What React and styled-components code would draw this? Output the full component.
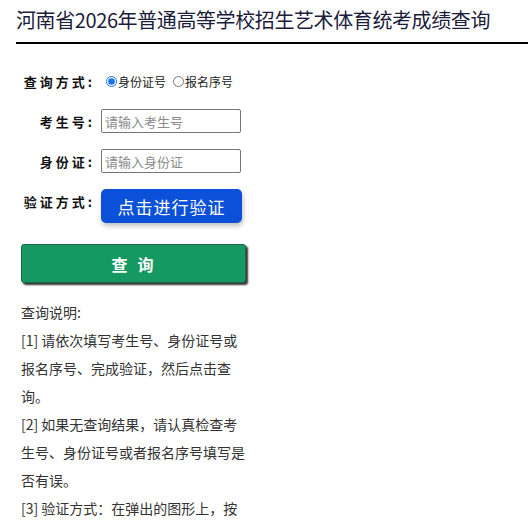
import styled, { createGlobalStyle } from "styled-components";

const GlobalStyle = createGlobalStyle`
  body {
    margin: 0;
    background: #fff;
    font-family: "Microsoft YaHei", "Noto Sans CJK SC", "Liberation Sans", sans-serif;
  }
`;

const Page = styled.div`
  width: 528px;
`;

const Header = styled.div`
  margin-left: 16px;
  padding-top: 7px;
  height: 35px;
  border-bottom: 2px solid #000;
`;

const Title = styled.h1`
  margin: 0;
  font-size: 20px;
  font-weight: normal;
  line-height: 26px;
  color: #1c1c3c;
  white-space: nowrap;
  letter-spacing: -0.4px;
`;

const Form = styled.div`
  width: 226px;
  margin-left: 21px;
  padding-top: 25px;
  display: flex;
  flex-direction: column;
  gap: 16px;
`;

const Row = styled.div`
  display: flex;
  align-items: ${p => (p.$top ? "flex-start" : "center")};
  height: ${p => p.$h || 24}px;
`;

const Label = styled.span`
  width: 74px;
  flex: none;
  text-align: right;
  font-size: 13px;
  font-weight: bold;
  letter-spacing: 3px;
  color: #111;
  margin-right: 6px;
  padding-top: ${p => p.$pt || 0}px;
`;

const RadioGroup = styled.div`
  display: flex;
  align-items: center;
  margin-left: 5px;
`;

const RadioLabel = styled.label`
  display: flex;
  align-items: center;
  font-size: 12px;
  color: #222;
  margin-right: 7px;
`;

const Radio = styled.input`
  width: 11px;
  height: 11px;
  margin: 0 1px 0 0;
  accent-color: #1a73e8;
`;

const Input = styled.input`
  box-sizing: border-box;
  width: 140px;
  height: 24px;
  border: 1px solid #767676;
  border-radius: 2px;
  padding: 0 3px;
  font-size: 13px;
  font-family: inherit;
  &::placeholder {
    color: #8a8a8a;
  }
`;

const VerifyButton = styled.button`
  width: 141px;
  height: 34px;
  border: none;
  border-radius: 5px;
  background: #0a50d8;
  color: #fff;
  font-size: 17px;
  font-family: inherit;
  letter-spacing: 1px;
  box-shadow: 1px 3px 5px rgba(0, 0, 0, 0.25);
`;

const QueryButton = styled.button`
  margin-top: 5px;
  width: 225px;
  height: 39px;
  border: 1px solid #1a6a4a;
  border-radius: 3px;
  background: #159862;
  color: #fff;
  font-size: 16px;
  font-weight: bold;
  font-family: inherit;
  letter-spacing: 10px;
  padding-left: 14px;
  box-shadow: 2px 2px 2px #333;
`;

const Notes = styled.div`
  margin: 15px 0 0 21px;
  width: 226px;
  font-size: 14px;
  line-height: 28px;
  color: #333;
`;

const NoteLine = styled.p`
  margin: 0;
`;

export default function App() {
  return (
    <Page>
      <GlobalStyle />
      <Header>
        <Title>河南省2026年普通高等学校招生艺术体育统考成绩查询</Title>
      </Header>
      <Form>
        <Row>
          <Label>查询方式:</Label>
          <RadioGroup>
            <RadioLabel>
              <Radio type="radio" name="mode" defaultChecked />
              身份证号
            </RadioLabel>
            <RadioLabel>
              <Radio type="radio" name="mode" />
              报名序号
            </RadioLabel>
          </RadioGroup>
        </Row>
        <Row>
          <Label>考生号:</Label>
          <Input placeholder="请输入考生号" />
        </Row>
        <Row>
          <Label>身份证:</Label>
          <Input placeholder="请输入身份证" />
        </Row>
        <Row $h={34} $top>
          <Label $pt={3}>验证方式:</Label>
          <VerifyButton>点击进行验证</VerifyButton>
        </Row>
        <QueryButton>查询</QueryButton>
      </Form>
      <Notes>
        <NoteLine>查询说明:</NoteLine>
        <NoteLine>[1] 请依次填写考生号、身份证号或报名序号、完成验证，然后点击查询。</NoteLine>
        <NoteLine>[2] 如果无查询结果，请认真检查考生号、身份证号或者报名序号填写是否有误。</NoteLine>
        <NoteLine>[3] 验证方式：在弹出的图形上，按照提示完成验证。</NoteLine>
      </Notes>
    </Page>
  );
}
